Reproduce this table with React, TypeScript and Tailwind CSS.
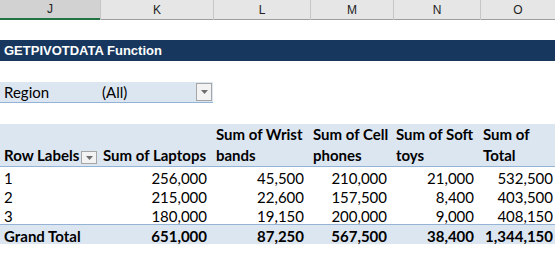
import React from 'react';

const cols = ['J', 'K', 'L', 'M', 'N', 'O'];

const rows = [
    { label: '1', values: ['256,000', '45,500', '210,000', '21,000', '532,500'] },
    { label: '2', values: ['215,000', '22,600', '157,500', '8,400', '403,500'] },
    { label: '3', values: ['180,000', '19,150', '200,000', '9,000', '408,150'] },
];

const total = ['651,000', '87,250', '567,500', '38,400', '1,344,150'];

const grid = 'grid grid-cols-[100px_113px_97px_83px_87px_1fr]';

const DropButton: React.FC<{ className?: string }> = ({ className }) => (
    <div className={`flex items-center justify-center border border-[#a6a6a6] bg-[#f3f3f3] ${className ?? ''}`}>
        <svg width="7" height="4" viewBox="0 0 7 4">
            <path d="M0 0h7L3.5 4z" fill="#6e6e6e" />
        </svg>
    </div>
);

const App: React.FC = () => {
    return (
        <div className="w-[555px] h-[263px] overflow-hidden bg-white font-['Lato',sans-serif] text-[15px] text-black">
            {/* column letters */}
            <div className={`${grid} h-[20px] bg-[#e6e6e6] border-b border-[#9e9e9e] font-['Liberation_Sans',sans-serif] text-[12px] text-[#222]`}>
                {cols.map((c, i) => (
                    <div
                        key={c}
                        className={`flex items-center justify-center ${i === 0 ? 'bg-[#d2d2d2] border-b-2 border-[#217346]' : 'border-l border-[#c6c6c6]'}`}
                    >
                        {c}
                    </div>
                ))}
            </div>

            <div className="h-[20px]" />

            <div className="h-[21px] bg-[#17375e] text-white font-['Liberation_Sans',sans-serif] font-bold text-[13px] flex items-center pl-[4px]">
                GETPIVOTDATA Function
            </div>

            <div className="h-[21px]" />

            <div className="w-[213px] h-[21px] bg-[#dce6f1] border-b border-[#95b3d7] flex items-center">
                <span className="w-[102px] pl-[4px]">Region</span>
                <span className="flex-1">(All)</span>
                <DropButton className="w-[16px] h-[18px] mr-[1px]" />
            </div>

            <div className="h-[21px]" />

            {/* pivot header */}
            <div className={`${grid} h-[43px] bg-[#dce6f1] border-b border-[#95b3d7] font-bold leading-[21px]`}>
                <div className="flex items-end gap-[2px] pl-[4px]">
                    <span>Row Labels</span>
                    <DropButton className="w-[16px] h-[13px] mb-[2px]" />
                </div>
                <div className="flex items-end pl-[3px]">Sum of Laptops</div>
                <div className="flex items-end pl-[3px]">Sum of Wrist bands</div>
                <div className="flex items-end pl-[3px]">Sum of Cell phones</div>
                <div className="flex items-end pl-[3px]">Sum of Soft toys</div>
                <div className="flex items-end pl-[3px]">Sum of Total</div>
            </div>

            {rows.map(r => (
                <div key={r.label} className={`${grid} h-[19px] items-center`}>
                    <div className="pl-[4px]">{r.label}</div>
                    {r.values.map((v, i) => (
                        <div key={i} className={`text-right ${i === 4 ? 'pr-[2px]' : 'pr-[6px]'}`}>{v}</div>
                    ))}
                </div>
            ))}

            <div className={`${grid} h-[20px] items-center bg-[#dce6f1] border-t border-[#95b3d7] font-bold`}>
                <div className="pl-[4px]">Grand Total</div>
                {total.map((v, i) => (
                    <div key={i} className={`text-right ${i === 4 ? 'pr-[2px]' : 'pr-[6px]'}`}>{v}</div>
                ))}
            </div>
        </div>
    );
};

export default App;
